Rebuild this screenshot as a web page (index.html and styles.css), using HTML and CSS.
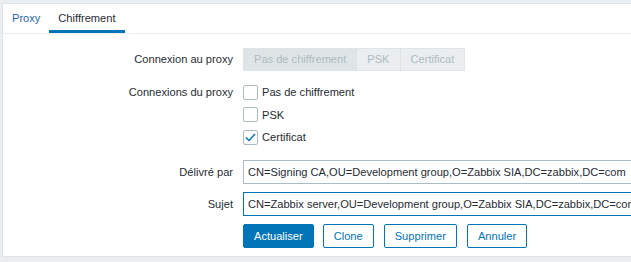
FILE: index.html
```html
<!DOCTYPE html>
<html>
	<head>
		<meta charset="utf-8" />
		<title>Chiffrement</title>
		<link rel="stylesheet" href="styles.css">
	</head>
	<body>
		<div class="panel">
			<ul class="tabs">
				<li><a href="javascript:;">Proxy</a></li>
				<li class="active"><a href="javascript:;">Chiffrement</a></li>
			</ul>
			<div class="form">
				<div class="row row-seg">
					<label>Connexion au proxy</label>
					<div class="seg">
						<span class="on">Pas de chiffrement</span>
						<span>PSK</span>
						<span>Certificat</span>
					</div>
				</div>
				<div class="row row-checks">
					<label>Connexions du proxy</label>
					<ul class="checks">
						<li><i class="box"></i><span>Pas de chiffrement</span></li>
						<li><i class="box"></i><span>PSK</span></li>
						<li><i class="box checked"><svg width="11" height="9" viewBox="0 0 11 9"><path d="M1 4.5 L4 7.5 L10 1" fill="none" stroke="#0275b8" stroke-width="1.5"/></svg></i><span>Certificat</span></li>
					</ul>
				</div>
				<div class="row row-input">
					<label>Délivré par</label>
					<input class="text" type="text" value="CN=Signing CA,OU=Development group,O=Zabbix SIA,DC=zabbix,DC=com">
				</div>
				<div class="row row-input">
					<label>Sujet</label>
					<input class="text focus" type="text" value="CN=Zabbix server,OU=Development group,O=Zabbix SIA,DC=zabbix,DC=com">
				</div>
				<div class="row row-btns">
					<label></label>
					<div class="btns">
						<a class="btn main" href="javascript:;">Actualiser</a>
						<a class="btn" href="javascript:;">Clone</a>
						<a class="btn" href="javascript:;">Supprimer</a>
						<a class="btn" href="javascript:;">Annuler</a>
					</div>
				</div>
			</div>
		</div>
	</body>
</html>
```
FILE: styles.css
```css
body,ul,li{
	margin: 0;
	padding: 0;
}
ul,li{
	list-style: none;
}
a{
	text-decoration: none;
}
body{
	background: #ebeef0;
	font-family: "Liberation Sans", Arial, sans-serif;
	font-size: 11.1px;
	color: #1f2c33;
	overflow: hidden;
}
.panel{
	margin: 3px 0 0 2px;
	width: 700px;
	height: 254px;
	background: #fff;
	border: 1px solid #dfe4e7;
	box-sizing: border-box;
}
.tabs{
	display: flex;
	height: 29px;
	border-bottom: 1px solid #ebeef0;
}
.tabs li{
	padding: 0 9px;
	line-height: 28px;
	border-bottom: 3px solid transparent;
}
.tabs li a{
	color: #1f65a6;
}
.tabs li.active{
	border-bottom-color: #0275b8;
}
.tabs li.active a{
	color: #1f2c33;
}
.form{
	padding-top: 14px;
}
.row{
	display: flex;
	align-items: flex-start;
}
.row label{
	width: 230px;
	flex: none;
	text-align: right;
	margin-right: 10px;
	line-height: 23px;
}
.row-seg{
	margin-bottom: 10px;
}
.seg{
	display: flex;
	height: 23px;
	border: 1px solid #dfe4e7;
	box-sizing: border-box;
	background: #ebeef0;
}
.seg span{
	padding: 0 10px;
	line-height: 21px;
	color: #acbbc2;
	border-left: 1px solid #dfe4e7;
}
.seg span:first-child{
	border-left: none;
}
.seg span.on{
	background: #dfe4e7;
}
.row-checks label{
	line-height: 22px;
}
.row-checks{
	margin-bottom: 11px;
}
.checks li{
	display: flex;
	align-items: center;
	height: 22.5px;
}
.box{
	width: 15px;
	height: 15px;
	border: 1px solid #acbbc2;
	border-radius: 2px;
	box-sizing: border-box;
	margin-right: 4px;
	display: flex;
	align-items: center;
	justify-content: center;
}
.row-input{
	margin-bottom: 8px;
}
.row-input label{
	line-height: 24px;
}
.text{
	width: 400px;
	height: 24px;
	box-sizing: border-box;
	border: 1px solid #acbbc2;
	padding: 0 4px;
	font-family: "Liberation Sans", Arial, sans-serif;
	font-size: 11.1px;
	color: #1f2c33;
	outline: none;
	margin: 0;
}
.text.focus{
	border-color: #0275b8;
}
.btns{
	display: flex;
}
.btn{
	height: 24px;
	box-sizing: border-box;
	border: 1px solid #0275b8;
	border-radius: 2px;
	line-height: 22px;
	padding: 0 10px;
	margin-right: 10px;
	color: #0275b8;
	background: #fff;
}
.btn.main{
	background: #0275b8;
	color: #fff;
	margin-right: 9px;
}
```
